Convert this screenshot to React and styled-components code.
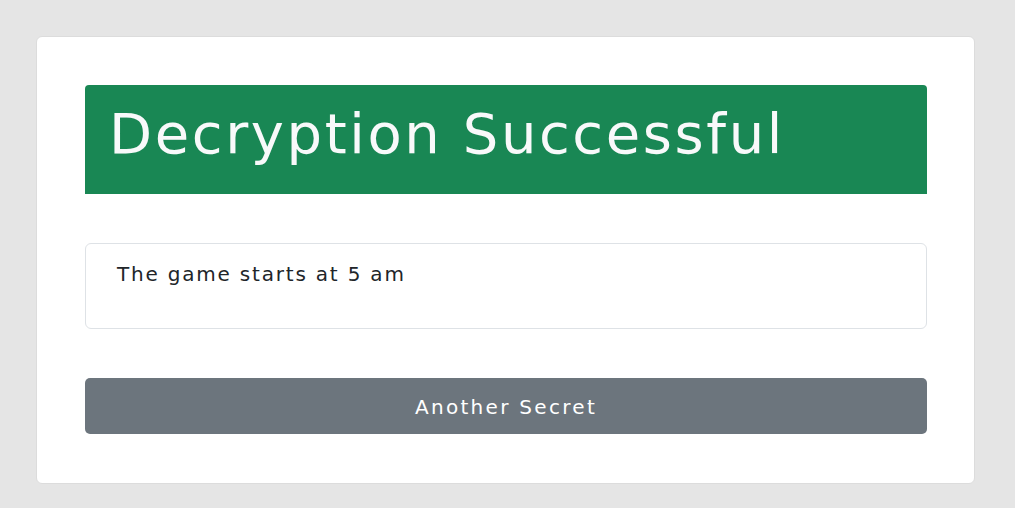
import React from "react";
import styled, { createGlobalStyle } from "styled-components";

const Global = createGlobalStyle`
  html, body { margin: 0; padding: 0; }
  body {
    background: #e5e5e5;
    font-family: "DejaVu Sans", "Open Sans", sans-serif;
    color: #212529;
  }
`;

const Page = styled.div`
  padding: 36px 40px 24px 36px;
`;

const Card = styled.div`
  background: #ffffff;
  border: 1px solid #dcdcdc;
  border-radius: 6px;
  padding: 48px 47px 49px 48px;
  display: flex;
  flex-direction: column;
  gap: 49px;
`;

const Banner = styled.div`
  background: #198754;
  border-radius: 4px 4px 0 0;
  height: 109px;
  display: flex;
  align-items: center;
  padding-left: 24px;
  padding-bottom: 12px;
  box-sizing: border-box;
`;

const Title = styled.h1`
  margin: 0;
  font-size: 56px;
  font-weight: 400;
  color: #f8f9fa;
  line-height: 1.2;
  letter-spacing: 2.6px;
`;

const MessageBox = styled.div`
  border: 1px solid #dee2e6;
  border-radius: 6px;
  height: 86px;
  box-sizing: border-box;
  padding: 15px 31px;
`;

const Message = styled.p`
  margin: 0;
  font-size: 20px;
  line-height: 30px;
  color: #212529;
  letter-spacing: 1.8px;
`;

const Button = styled.button`
  height: 56px;
  border: none;
  border-radius: 5px;
  background: #6c757d;
  color: #ffffff;
  font-family: inherit;
  font-size: 20px;
  font-weight: 500;
  letter-spacing: 2.3px;
  cursor: pointer;
  padding: 2px 0 0;
`;

export default function App() {
  return (
    <>
      <Global />
      <Page>
        <Card>
          <Banner>
            <Title>Decryption Successful</Title>
          </Banner>
          <MessageBox>
            <Message>The game starts at 5 am</Message>
          </MessageBox>
          <Button>Another Secret</Button>
        </Card>
      </Page>
    </>
  );
}
